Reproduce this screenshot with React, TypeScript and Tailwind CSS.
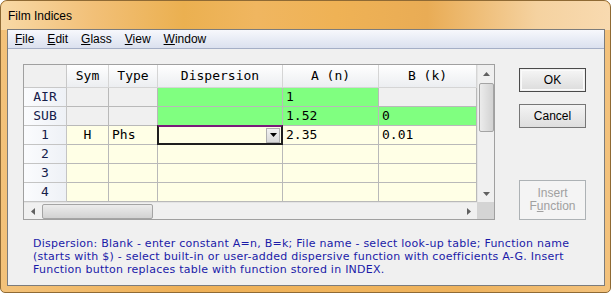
import React from "react";

const GREEN = "bg-[#80ff80]";
const GRAY = "bg-[#f0f0f0]";
const YEL = "bg-[#ffffe6]";

type Row = {
  h: string;
  sym: string;
  symBg: string;
  type: string;
  typeBg: string;
  dispBg: string;
  a: string;
  aBg: string;
  b: string;
  bBg: string;
  editor?: boolean;
};

const rows: Row[] = [
  { h: "AIR", sym: "", symBg: GRAY, type: "", typeBg: GRAY, dispBg: GREEN, a: "1", aBg: GREEN, b: "", bBg: GRAY },
  { h: "SUB", sym: "", symBg: GRAY, type: "", typeBg: GRAY, dispBg: GREEN, a: "1.52", aBg: GREEN, b: "0", bBg: GREEN },
  { h: "1", sym: "H", symBg: YEL, type: "Phs", typeBg: YEL, dispBg: YEL, a: "2.35", aBg: YEL, b: "0.01", bBg: YEL, editor: true },
  { h: "2", sym: "", symBg: YEL, type: "", typeBg: YEL, dispBg: YEL, a: "", aBg: YEL, b: "", bBg: YEL },
  { h: "3", sym: "", symBg: YEL, type: "", typeBg: YEL, dispBg: YEL, a: "", aBg: YEL, b: "", bBg: YEL },
  { h: "4", sym: "", symBg: YEL, type: "", typeBg: YEL, dispBg: YEL, a: "", aBg: YEL, b: "", bBg: YEL },
];

function Hdr({ children }: { children?: React.ReactNode }) {
  return (
    <div className="flex items-center justify-center border-r border-b border-[#d5d5d5] bg-gradient-to-b from-[#ffffff] to-[#eceef1] text-black">
      {children}
    </div>
  );
}

function Cell({ bg, children, center }: { bg: string; children?: React.ReactNode; center?: boolean }) {
  return (
    <div
      className={`flex items-center border-r border-b border-[#b9b9b9] ${bg} ${center ? "justify-center" : "pl-[3px]"} text-black`}
    >
      {children}
    </div>
  );
}

function Triangle({ dir }: { dir: "up" | "down" | "left" | "right" }) {
  const pts =
    dir === "up"
      ? "0,4 7,4 3.5,0"
      : dir === "down"
      ? "0,0 7,0 3.5,4"
      : dir === "left"
      ? "4,0 4,7 0,3.5"
      : "0,0 0,7 4,3.5";
  const w = dir === "up" || dir === "down" ? 7 : 4;
  const h = dir === "up" || dir === "down" ? 4 : 7;
  return (
    <svg width={w} height={h} viewBox={`0 0 ${w} ${h}`}>
      <polygon points={pts} fill="#606060" />
    </svg>
  );
}

export default function App() {
  return (
    <div className="w-[611px] h-[293px] overflow-hidden bg-white">
      <div className="w-[611px] h-[293px] rounded-t-[7px] rounded-b-[5px] border border-[#8f6a34] bg-[linear-gradient(to_right,#f3c27a,#eeb057_30%,#f0b45c_55%,#eeb25c_75%,#f3c27c)] flex flex-col relative">
        <div className="absolute inset-x-0 top-0 h-[29px] rounded-t-[7px] bg-[linear-gradient(to_right,#f8d9a6,#f2c078_15%,#ebb050_30%,#f0b660_42%,#efb255_55%,#e9ac55_70%,#f5d2a0_88%,#f8dab0)]" />
        {/* title */}
        <div className="relative h-[28px] flex items-center pl-[7px] pt-[1px] font-['Liberation_Sans',sans-serif] text-[12px] text-black">
          Film Indices
        </div>
        {/* client */}
        <div className="relative ml-[6px] mr-[5px] mb-[6px] flex-1 border border-[#7c7c7c] bg-[#f0f0f0] flex flex-col">
          {/* menu */}
          <div className="h-[19px] flex items-center pl-[7px] gap-[13px] bg-gradient-to-b from-[#f7f8fc] to-[#dbe1ef] border-b border-[#a5afc6] font-['Liberation_Sans',sans-serif] text-[12px] text-black">
            <span><u>F</u>ile</span>
            <span><u>E</u>dit</span>
            <span><u>G</u>lass</span>
            <span><u>V</u>iew</span>
            <span><u>W</u>indow</span>
          </div>
          {/* body */}
          <div className="flex flex-col pl-[15px] pt-[15px]">
            <div className="flex">
              {/* grid */}
              <div className="w-[472px] h-[156px] border border-[#a0a0a0] flex flex-col bg-[#f0f0f0] font-['DejaVu_Sans_Mono',monospace] text-[13px]">
                <div className="flex">
                  <div className="w-[453px] grid grid-cols-[43px_42px_49px_125px_96px_98px] grid-rows-[23px_repeat(6,19px)]">
                    <div className="border-r border-b border-[#c8c8c8] bg-[#f0f0f0]" />
                    <Hdr>Sym</Hdr>
                    <Hdr>Type</Hdr>
                    <Hdr>Dispersion</Hdr>
                    <Hdr>A (n)</Hdr>
                    <Hdr>B (k)</Hdr>
                    {rows.map((r) => (
                      <React.Fragment key={r.h}>
                        <div className="flex items-center justify-center border-r border-b border-[#c4c4c4] bg-gradient-to-r from-[#fbfcfe] to-[#eef1f6] text-[#16204a]">
                          {r.h}
                        </div>
                        <Cell bg={r.symBg} center>{r.sym}</Cell>
                        <Cell bg={r.typeBg}>{r.type}</Cell>
                        {r.editor ? (
                          <div className="relative border-r border-b border-[#b9b9b9] bg-[#ffffe6]">
                            <div className="absolute left-[-1px] top-[-1px] right-[-1px] bottom-[-1px] border-2 border-[#1e1e1e] border-t-[#7a1a7a] bg-[#ffffe6] flex justify-end items-center pr-[1px]">
                              <div className="w-[14px] h-[15px] bg-gradient-to-b from-[#f2f2f2] to-[#d8d8d8] border border-[#b0b0b0] flex items-center justify-center">
                                <svg width="7" height="4" viewBox="0 0 7 4">
                                  <polygon points="0,0 7,0 3.5,4" fill="#000" />
                                </svg>
                              </div>
                            </div>
                          </div>
                        ) : (
                          <Cell bg={r.dispBg} />
                        )}
                        <Cell bg={r.aBg}>{r.a}</Cell>
                        <Cell bg={r.bBg}>{r.b}</Cell>
                      </React.Fragment>
                    ))}
                  </div>
                  {/* vertical scrollbar */}
                  <div className="w-[17px] h-[137px] bg-[#f0f0f0] border-l border-[#e4e4e4] flex flex-col items-center">
                    <div className="h-[17px] flex items-center justify-center">
                      <Triangle dir="up" />
                    </div>
                    <div className="w-[15px] h-[49px] mt-[1px] rounded-[2px] border border-[#a4a4a4] bg-gradient-to-r from-[#ececec] to-[#d2d2d2]" />
                    <div className="flex-1" />
                    <div className="h-[17px] flex items-center justify-center">
                      <Triangle dir="down" />
                    </div>
                  </div>
                </div>
                <div className="flex">
                  {/* horizontal scrollbar */}
                  <div className="w-[453px] h-[17px] bg-[#f0f0f0] border-t border-[#e4e4e4] flex items-center">
                    <div className="w-[17px] flex items-center justify-center">
                      <Triangle dir="left" />
                    </div>
                    <div className="w-[111px] h-[15px] ml-[1px] rounded-[2px] border border-[#a4a4a4] bg-gradient-to-b from-[#ececec] to-[#d2d2d2]" />
                    <div className="flex-1" />
                    <div className="w-[17px] flex items-center justify-center">
                      <Triangle dir="right" />
                    </div>
                  </div>
                  <div className="w-[17px] h-[17px] bg-[#d4d4d4]" />
                </div>
              </div>
              {/* buttons */}
              <div className="ml-[24px] pt-[4px] flex flex-col font-['Liberation_Sans',sans-serif] text-[12px]">
                <button className="w-[67px] h-[24px] border border-[#4a4a4a] bg-[#f0f0f0] p-[1px]">
                  <div className="w-full h-full border border-[#fafafa] bg-gradient-to-b from-[#f4f4f4] to-[#dedede] flex items-center justify-center text-black">
                    OK
                  </div>
                </button>
                <button className="mt-[12px] w-[67px] h-[24px] border border-[#767676] bg-gradient-to-b from-[#f4f4f4] to-[#dedede] flex items-center justify-center text-black">
                  Cancel
                </button>
                <button className="mt-[52px] w-[67px] h-[40px] border border-[#adb2b5] bg-[#f4f4f4] flex flex-col items-center justify-center leading-[13px] text-[#a0a0a0]">
                  <span>Insert</span>
                  <span>F<u>u</u>nction</span>
                </button>
              </div>
            </div>
            <div className="mt-[17px] ml-[10px] font-['DejaVu_Sans',sans-serif] text-[11px] tracking-[0.25px] leading-[13px] text-[#1a1aa8] whitespace-nowrap">
              Dispersion: Blank - enter constant A=n, B=k; File name - select look-up table; Function name
              <br />
              (starts with $) - select built-in or user-added dispersive function with coefficients A-G. Insert
              <br />
              Function button replaces table with function stored in INDEX.
            </div>
          </div>
        </div>
      </div>
    </div>
  );
}
